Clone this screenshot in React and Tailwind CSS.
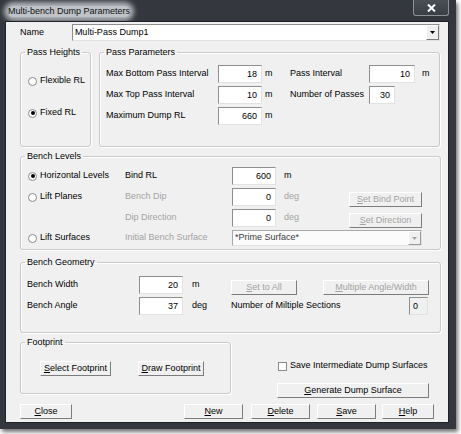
import { useState } from 'react';

const inputCls =
    'h-[18px] bg-white border border-t-[#8e8e8e] border-l-[#8e8e8e] border-r-[#e2e2e2] border-b-[#e2e2e2] text-right pr-[4px] leading-[16px] text-black';

function Btn({ label, u = 0, w, disabled = false, className = '' }) {
    return (
        <button
            type="button"
            className={`h-[15px] shrink-0 bg-[#f0f0f0] border border-t-white border-l-white border-r-[#7c7c7c] border-b-[#7c7c7c] leading-[13px] text-center ${disabled ? 'text-[#a3a3a3]' : 'text-black'} ${className}`}
            style={{ width: w }}
        >
            {label.slice(0, u)}
            <u className="underline-offset-1">{label[u]}</u>
            {label.slice(u + 1)}
        </button>
    );
}

function Radio({ checked, label, onClick }) {
    return (
        <div className="flex items-center h-[12px] cursor-default" onClick={onClick}>
            <span className="w-[9px] h-[9px] rounded-full bg-white border border-[#8a8a8a] flex items-center justify-center shrink-0">
                {checked && <span className="w-[4px] h-[4px] rounded-full bg-black" />}
            </span>
            <span className="ml-[3px] whitespace-nowrap">{label}</span>
        </div>
    );
}

function Group({ title, className = '', children }) {
    return (
        <fieldset className={`border border-[#c9c9c9] rounded-[3px] shadow-[1px_1px_0_#ffffff,inset_1px_1px_0_#ffffff] ${className}`}>
            <legend className="ml-[4px] px-[2px] leading-[11px] whitespace-nowrap">{title}</legend>
            {children}
        </fieldset>
    );
}

export default function App() {
    const [passMode, setPassMode] = useState('fixed');
    const [levelMode, setLevelMode] = useState('horizontal');
    const [saveSurfaces, setSaveSurfaces] = useState(false);

    return (
        <div className="w-[461px] h-[434px] bg-white font-['Liberation_Sans',Arial,sans-serif] text-[9px] text-black select-none">
            <div className="w-[456px] h-[429px] bg-[#34383e] pl-[5px] pr-[7px] pb-[6px] flex flex-col shadow-[2px_3px_4px_rgba(0,0,0,0.55)]">
                {/* title bar */}
                <div className="h-[21px] shrink-0 flex items-start justify-between">
                    <span className="mt-[6px] ml-[3px] leading-[11px] text-[#111] bg-[#bfc3c8] rounded-[8px] shadow-[0_0_5px_4px_#b0b4b9]">
                        Multi-bench Dump Parameters
                    </span>
                    <button
                        type="button"
                        className="w-[36px] h-[16px] border border-t-0 border-[#8d9299] rounded-b-[3px] bg-gradient-to-b from-[#4a4f56] to-[#3a3e44] flex items-center justify-center"
                    >
                        <svg width="9" height="8" viewBox="0 0 9 8">
                            <path d="M1 0.5 L8 7.5 M8 0.5 L1 7.5" stroke="#ffffff" strokeWidth="2" />
                        </svg>
                    </button>
                </div>

                {/* client */}
                <div className="flex-1 bg-[#f0f0f0] border border-[#1f2226] pl-[14px] pr-[8px] pt-[2px] flex flex-col">
                    {/* name row */}
                    <div className="flex items-center h-[17px]">
                        <span className="w-[52px]">Name</span>
                        <div className="w-[369px] h-[17px] bg-white border border-t-[#8e8e8e] border-l-[#8e8e8e] border-r-[#e2e2e2] border-b-[#e2e2e2] flex items-center">
                            <span className="flex-1 pl-[2px]">Multi-Pass Dump1</span>
                            <span className="w-[13px] h-[15px] bg-[#f0f0f0] border border-t-white border-l-white border-r-[#7c7c7c] border-b-[#7c7c7c] flex items-center justify-center">
                                <svg width="5" height="3" viewBox="0 0 5 3">
                                    <path d="M0 0 H5 L2.5 3 Z" fill="#000" />
                                </svg>
                            </span>
                        </div>
                    </div>

                    {/* pass heights / parameters */}
                    <div className="flex mt-[6px] gap-[8px]">
                        <Group title="Pass Heights" className="w-[71px] h-[100px]">
                            <div className="pl-[7px] pt-[17px] flex flex-col gap-[20px]">
                                <Radio checked={passMode === 'flexible'} label="Flexible RL" onClick={() => setPassMode('flexible')} />
                                <Radio checked={passMode === 'fixed'} label="Fixed RL" onClick={() => setPassMode('fixed')} />
                            </div>
                        </Group>
                        <Group title="Pass Parameters" className="w-[341px] h-[100px]">
                            <div className="pl-[6px] pt-[7px] flex flex-col gap-[3px]">
                                <div className="flex items-center">
                                    <span className="w-[112px]">Max Bottom Pass Interval</span>
                                    <div className={`${inputCls} w-[44px]`}>18</div>
                                    <span className="w-[28px] pl-[3px]">m</span>
                                    <span className="w-[79px]">Pass Interval</span>
                                    <div className={`${inputCls} w-[46px]`}>10</div>
                                    <span className="pl-[7px]">m</span>
                                </div>
                                <div className="flex items-center">
                                    <span className="w-[112px]">Max Top Pass Interval</span>
                                    <div className={`${inputCls} w-[44px]`}>10</div>
                                    <span className="w-[28px] pl-[3px]">m</span>
                                    <span className="w-[79px]">Number of Passes</span>
                                    <div className={`${inputCls} w-[26px]`}>30</div>
                                </div>
                                <div className="flex items-center">
                                    <span className="w-[112px]">Maximum Dump RL</span>
                                    <div className={`${inputCls} w-[44px]`}>660</div>
                                    <span className="w-[28px] pl-[3px]">m</span>
                                </div>
                            </div>
                        </Group>
                    </div>

                    {/* bench levels */}
                    <Group title="Bench Levels" className="mt-[4px] w-[421px] h-[99px]">
                        <div className="pl-[7px] pt-[5px] flex flex-col gap-[3px]">
                            <div className="flex items-center h-[18px]">
                                <div className="w-[97px]">
                                    <Radio checked={levelMode === 'horizontal'} label="Horizontal Levels" onClick={() => setLevelMode('horizontal')} />
                                </div>
                                <span className="w-[107px]">Bind RL</span>
                                <div className={`${inputCls} w-[44px]`}>600</div>
                                <span className="pl-[8px]">m</span>
                            </div>
                            <div className="flex items-center h-[18px]">
                                <div className="w-[97px]">
                                    <Radio checked={levelMode === 'planes'} label="Lift Planes" onClick={() => setLevelMode('planes')} />
                                </div>
                                <span className="w-[107px] text-[#a3a3a3]">Bench Dip</span>
                                <div className={`${inputCls} w-[44px]`}>0</div>
                                <span className="w-[73px] pl-[8px] text-[#a3a3a3]">deg</span>
                                <Btn label="Set Bind Point" w={73} disabled className="self-end mb-[-1px]" />
                            </div>
                            <div className="flex items-center h-[18px]">
                                <div className="w-[97px]" />
                                <span className="w-[107px] text-[#a3a3a3]">Dip Direction</span>
                                <div className={`${inputCls} w-[44px]`}>0</div>
                                <span className="w-[73px] pl-[8px] text-[#a3a3a3]">deg</span>
                                <Btn label="Set Direction" w={73} disabled className="self-end mb-[-1px]" />
                            </div>
                            <div className="flex items-center h-[16px]">
                                <div className="w-[97px]">
                                    <Radio checked={levelMode === 'surfaces'} label="Lift Surfaces" onClick={() => setLevelMode('surfaces')} />
                                </div>
                                <span className="w-[107px] text-[#a3a3a3]">Initial Bench Surface</span>
                                <div className="w-[190px] h-[16px] bg-[#fbfbfb] border border-t-[#a8a8a8] border-l-[#a8a8a8] border-r-[#e2e2e2] border-b-[#e2e2e2] flex items-center">
                                    <span className="flex-1 pl-[2px] text-[#3a3a3a]">*Prime Surface*</span>
                                    <span className="w-[13px] h-[14px] bg-[#f0f0f0] border border-t-white border-l-white border-r-[#9a9a9a] border-b-[#9a9a9a] flex items-center justify-center">
                                        <svg width="5" height="3" viewBox="0 0 5 3">
                                            <path d="M0 0 H5 L2.5 3 Z" fill="#a3a3a3" />
                                        </svg>
                                    </span>
                                </div>
                            </div>
                        </div>
                    </Group>

                    {/* bench geometry */}
                    <Group title="Bench Geometry" className="mt-[7px] w-[421px] h-[76px]">
                        <div className="pl-[6px] pt-[8px] flex flex-col gap-[3px]">
                            <div className="flex items-center h-[18px]">
                                <span className="w-[112px]">Bench Width</span>
                                <div className={`${inputCls} w-[44px]`}>20</div>
                                <span className="w-[48px] pl-[9px]">m</span>
                                <Btn label="Set to All" w={66} disabled className="self-end mb-[-1px]" />
                                <span className="w-[26px]" />
                                <Btn label="Multiple Angle/Width" w={106} disabled className="self-end mb-[-1px]" />
                            </div>
                            <div className="flex items-center h-[18px]">
                                <span className="w-[112px]">Bench Angle</span>
                                <div className={`${inputCls} w-[44px]`}>37</div>
                                <span className="w-[48px] pl-[9px]">deg</span>
                                <span className="w-[178px]">Number of Miltiple Sections</span>
                                <div className="w-[19px] h-[18px] bg-[#f0f0f0] border border-t-[#8e8e8e] border-l-[#8e8e8e] border-r-[#e2e2e2] border-b-[#e2e2e2] pl-[3px] leading-[16px]">
                                    0
                                </div>
                            </div>
                        </div>
                    </Group>

                    {/* footprint + generate */}
                    <div className="flex mt-[4px]">
                        <Group title="Footprint" className="w-[211px] h-[57px]">
                            <div className="pl-[19px] pt-[13px] flex gap-[27px]">
                                <Btn label="Select Footprint" w={71} />
                                <Btn label="Draw Footprint" w={66} />
                            </div>
                        </Group>
                        <div className="ml-[46px] pt-[24px] flex flex-col">
                            <div className="flex items-center h-[10px] pl-[1px]" onClick={() => setSaveSurfaces((v) => !v)}>
                                <span className="w-[9px] h-[9px] bg-white border border-[#8a8a8a] flex items-center justify-center">
                                    {saveSurfaces && (
                                        <svg width="7" height="7" viewBox="0 0 7 7">
                                            <path d="M1 3.5 L3 5.5 L6 1.5" stroke="#000" strokeWidth="1.2" fill="none" />
                                        </svg>
                                    )}
                                </span>
                                <span className="ml-[3px] whitespace-nowrap">Save Intermediate Dump Surfaces</span>
                            </div>
                            <Btn label="Generate Dump Surface" w={152} className="mt-[12px]" />
                        </div>
                    </div>

                    {/* bottom buttons */}
                    <div className="flex mt-[6px]">
                        <Btn label="Close" w={52} />
                        <div className="w-[112px]" />
                        <Btn label="New" w={59} />
                        <Btn label="Delete" w={59} className="ml-[8px]" />
                        <Btn label="Save" w={59} className="ml-[7px]" />
                        <Btn label="Help" w={52} className="ml-[6px]" />
                    </div>
                </div>
            </div>
        </div>
    );
}
